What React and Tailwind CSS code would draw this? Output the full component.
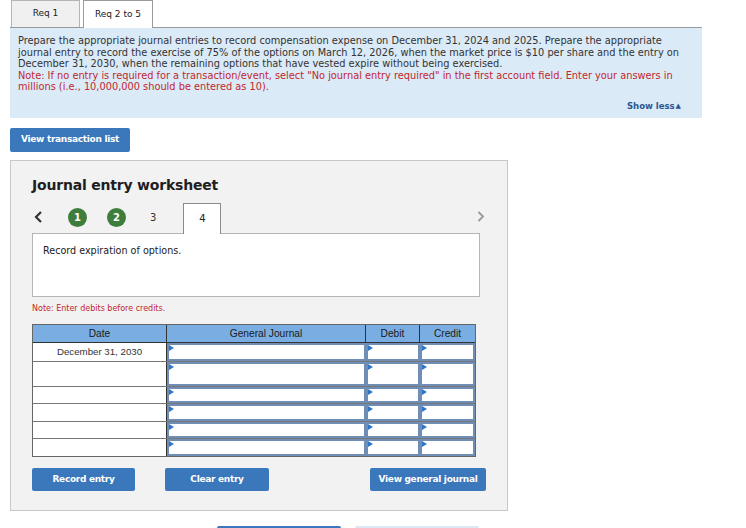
import React from 'react';

const rowHeights = [18, 25, 17, 18, 17, 18];

const Tri = () => (
  <span className="absolute left-0 top-0 w-0 h-0 border-t-[3px] border-b-[3px] border-l-[5px] border-t-transparent border-b-transparent border-l-[#2f76c9]" />
);

const InputCell = () => (
  <div className="relative bg-white border-2 border-[#6f8db5]">
    <Tri />
  </div>
);

const Btn = ({ children, className = '' }) => (
  <button className={`h-[23px] rounded-[2px] bg-[#3a77bb] text-white text-[9px] font-bold tracking-[-0.3px] ${className}`}>
    {children}
  </button>
);

export default function App() {
  return (
    <div className="w-[746px] h-[528px] overflow-hidden bg-white text-[#222]" style={{ fontFamily: '"DejaVu Sans", Verdana, sans-serif' }}>
      {/* tabs */}
      <div className="flex items-end pl-[11px] gap-[3px] h-[27px]">
        <div className="w-[69px] h-[27px] bg-[#f0f0f0] border border-b-0 border-[#b5b5b5] flex items-center justify-center text-[9px]">Req 1</div>
        <div className="w-[70px] h-[28px] bg-white border border-b-0 border-[#9a9a9a] flex items-center justify-center text-[9px] -mb-px relative z-10">Req 2 to 5</div>
      </div>

      {/* instructions */}
      <div className="ml-[10px] w-[692px] h-[91px] bg-[#dbeaf7] border-t border-[#9a9a9a] pt-[7px] pl-[8px] text-[9.8px] leading-[11.6px] relative">
        <div className="text-[#333] whitespace-nowrap">
          <div>Prepare the appropriate journal entries to record compensation expense on December 31, 2024 and 2025. Prepare the appropriate</div>
          <div>journal entry to record the exercise of 75% of the options on March 12, 2026, when the market price is $10 per share and the entry on</div>
          <div>December 31, 2030, when the remaining options that have vested expire without being exercised.</div>
        </div>
        <div className="text-[#c1272d] whitespace-nowrap">
          <div>Note: If no entry is required for a transaction/event, select "No journal entry required" in the first account field. Enter your answers in</div>
          <div>millions (i.e., 10,000,000 should be entered as 10).</div>
        </div>
        <div className="absolute right-[21px] top-[73px] text-[8.5px] font-bold text-[#2a568f] flex items-center gap-[1px]">
          Show less<span className="text-[7px]">▲</span>
        </div>
      </div>

      <div className="ml-[10px] mt-[10px] flex">
        <Btn className="w-[120px] h-[24px]">View transaction list</Btn>
      </div>

      {/* worksheet */}
      <div className="ml-[10px] mt-[8px] w-[498px] h-[351px] bg-[#f2f2f2] border border-[#c8c8c8] pl-[21px] pt-[14px]">
        <div className="text-[14px] font-bold text-[#1e1e1e] leading-[20px] tracking-[-0.2px]">Journal entry worksheet</div>

        <div className="mt-[7px] flex items-end h-[31px] relative">
          <div className="w-[447px] flex items-center h-[31px]">
            <svg width="9" height="12" viewBox="0 0 9 12" className="ml-[2px] mb-[2px]">
              <path d="M7 1 L2 6 L7 11" fill="none" stroke="#333" strokeWidth="2.2" />
            </svg>
            <span className="ml-[25px] w-[19px] h-[19px] rounded-full bg-[#3f7d3c] text-white text-[10px] font-bold flex items-center justify-center">1</span>
            <span className="ml-[20px] w-[19px] h-[19px] rounded-full bg-[#3f7d3c] text-white text-[10px] font-bold flex items-center justify-center">2</span>
            <span className="ml-[24px] text-[10px] text-[#333]">3</span>
            <div className="ml-[27px] w-[38px] h-[31px] bg-white border border-b-0 border-[#8a8a8a] flex items-center justify-center text-[10px] relative z-10 -mb-px">4</div>
            <svg width="8" height="11" viewBox="0 0 8 11" className="ml-auto mr-[-6px] mb-[2px]">
              <path d="M1.5 1 L6 5.5 L1.5 10" fill="none" stroke="#999" strokeWidth="1.8" />
            </svg>
          </div>
        </div>

        <div className="w-[448px] h-[64px] bg-white border border-[#b5b5b5] pl-[10px] pt-[10px] text-[9.6px] text-[#222]">
          Record expiration of options.
        </div>

        <div className="mt-[6px] text-[8px] text-[#c1272d]">Note: Enter debits before credits.</div>

        {/* table */}
        <div className="mt-[9px] w-[444px] border border-[#666] bg-[#777]" style={{ fontFamily: '"Liberation Sans", Arial, sans-serif' }}>
          <div className="grid grid-cols-[134px_199px_54px_55px] h-[18px] bg-[#7aaee3] text-[10.2px] text-[#1a1a1a] border-b border-[#333]">
            <div className="flex items-center justify-center border-r border-[#333]">Date</div>
            <div className="flex items-center justify-center border-r border-[#333]">General Journal</div>
            <div className="flex items-center justify-center border-r border-[#333]">Debit</div>
            <div className="flex items-center justify-center">Credit</div>
          </div>
          {rowHeights.map((h, i) => (
            <div
              key={i}
              className={`grid grid-cols-[134px_199px_54px_55px] ${i > 0 ? 'border-t border-[#777]' : ''}`}
              style={{ height: h }}
            >
              <div className="bg-white border-r border-[#333] flex items-center justify-center text-[9.7px] text-[#333]">
                {i === 0 ? 'December 31, 2030' : ''}
              </div>
              <InputCell />
              <InputCell />
              <InputCell />
            </div>
          ))}
        </div>

        <div className="mt-[11px] flex items-center">
          <Btn className="w-[103px]">Record entry</Btn>
          <Btn className="ml-[30px] w-[104px]">Clear entry</Btn>
          <Btn className="ml-[101px] w-[116px]">View general journal</Btn>
        </div>
      </div>

      <div className="ml-[217px] mt-[15px] flex gap-[14px]">
        <div className="w-[124px] h-[20px] rounded-[2px] bg-[#3a77bb]" />
        <div className="w-[124px] h-[20px] rounded-[2px] bg-[#dbe7f4]" />
      </div>
    </div>
  );
}
